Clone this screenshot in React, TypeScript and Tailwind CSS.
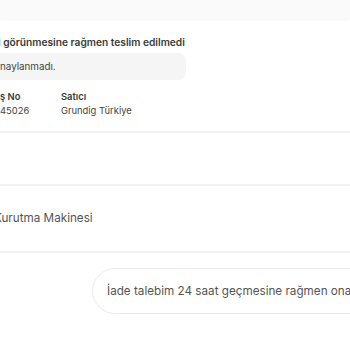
export default function App() {
  return (
    <div
      className="relative h-[350px] w-[350px] overflow-hidden bg-white text-[#3a3a3a]"
      style={{ fontFamily: 'Inter, "Noto Sans", sans-serif' }}
    >
      <div className="h-[19px] bg-[#fafafa] shadow-[0_1px_3px_rgba(0,0,0,0.04)]" />

      <div className="border-b-2 border-[#f2f2f2] pb-[13px] pt-[15px]">
        <div className="ml-[-2px] whitespace-nowrap text-[10.2px] font-semibold leading-4">
          i görünmesine rağmen teslim edilmedi
        </div>
        <div className="mt-[3px] flex h-[27px] w-[186px] items-center rounded-r-lg bg-[#f5f5f5] pt-[1px] text-[9.8px] text-[#444]">
          naylanmadı.
        </div>
        <div className="mt-[10px] flex text-[9.4px] leading-[14px]">
          <div className="w-[61px]">
            <div className="font-semibold">ş No</div>
            <div className="text-[#444]">45026</div>
          </div>
          <div>
            <div className="font-semibold">Satıcı</div>
            <div className="text-[#444]">Grundig Türkiye</div>
          </div>
        </div>
      </div>

      <div className="h-[53px] border-b-2 border-[#f2f2f2]" />

      <div className="h-[67px] border-b-2 border-[#f2f2f2] pt-[24px]">
        <div className="ml-[-6px] whitespace-nowrap text-[11.7px] leading-4 text-[#555]">Kurutma Makinesi</div>
      </div>

      <div className="pl-[92px] pt-[15px]">
        <div className="flex h-[46px] w-[300px] items-center whitespace-nowrap rounded-l-full border border-[#ececec] bg-white pl-[14px] pt-[1px] text-[11.7px] text-[#555]">
          İade talebim 24 saat geçmesine rağmen onaylanmadı.
        </div>
      </div>
    </div>
  )
}
